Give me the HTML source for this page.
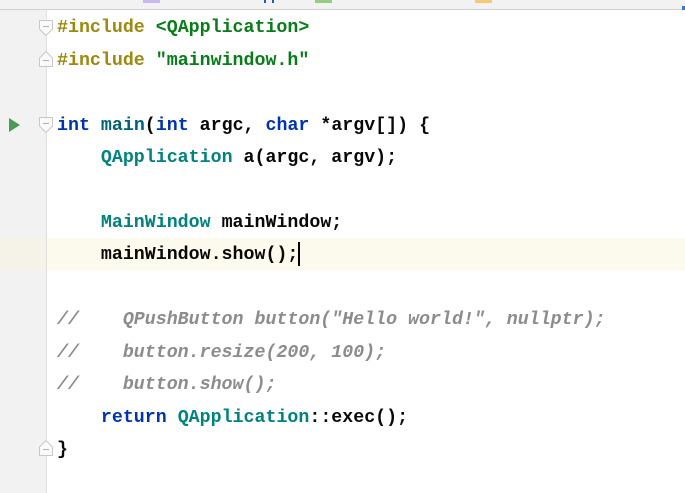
<!DOCTYPE html>
<html><head><style>
body{margin:0;width:685px;height:493px;overflow:hidden;background:#fff;position:relative;font-family:"Liberation Mono",monospace;}
#top{position:absolute;left:0;top:0;width:685px;height:9px;background:#f2f2f2;border-bottom:1px solid #d0d0d0;}
#gut{position:absolute;left:0;top:10px;width:46px;height:483px;background:#f2f2f2;border-right:1px solid #e0e0e0;}
#hl{position:absolute;left:0;top:238px;width:685px;height:32px;background:#fcfaed;}
#hlg{position:absolute;left:0;top:238px;width:46px;height:32px;background:#f5f3e8;border-right:1px solid #e0e0e0;}
.l{position:absolute;left:57px;height:32px;line-height:32px;font-size:18.3px;font-weight:bold;white-space:pre;color:#080808;}
.pp{color:#9e880d}.s{color:#067d17}.k{color:#0033b3}.t{color:#00827f}.f{color:#00627a}.c{color:#8c8c8c;font-style:italic}
.fold{position:absolute;left:38px;}
</style></head><body>
<div id="top">
<div style="position:absolute;left:143px;top:0;width:17px;height:3px;background:#c8b8f0"></div>
<div style="position:absolute;left:264px;top:0;width:2px;height:3px;background:#2060b0"></div>
<div style="position:absolute;left:272px;top:0;width:2px;height:3px;background:#2060b0"></div>
<div style="position:absolute;left:315px;top:0;width:17px;height:3px;background:#98cc80"></div>
<div style="position:absolute;left:475px;top:0;width:17px;height:3px;background:#f5c87a"></div>
<div style="position:absolute;left:682px;top:6px;width:3px;height:4px;background:#3a78d8"></div>
</div>
<div id="gut"></div>
<div id="hl"></div><div id="hlg"></div>
<svg class="fold" style="top:19px" width="16" height="18"><path d="M1.5 1.5H14.5V10L8 16.5L1.5 10Z" fill="#fafafa" stroke="#c8c8c8"/><path d="M5 7.5H11" stroke="#b0b0b0"/></svg>
<svg class="fold" style="top:50px" width="16" height="18"><path d="M1.5 16.5H14.5V8L8 1.5L1.5 8Z" fill="#fafafa" stroke="#c8c8c8"/><path d="M5 10.5H11" stroke="#b0b0b0"/></svg>
<svg class="fold" style="top:116px" width="16" height="18"><path d="M1.5 1.5H14.5V10L8 16.5L1.5 10Z" fill="#fafafa" stroke="#c8c8c8"/><path d="M5 7.5H11" stroke="#b0b0b0"/></svg>
<svg class="fold" style="top:439px" width="16" height="18"><path d="M1.5 16.5H14.5V8L8 1.5L1.5 8Z" fill="#fafafa" stroke="#c8c8c8"/><path d="M5 10.5H11" stroke="#b0b0b0"/></svg>
<svg style="position:absolute;left:9px;top:118px" width="12" height="14"><polygon points="0,0 11,7 0,14" fill="#499c54"/></svg>
<div class="l" style="top:12px"><span class="pp">#include</span> <span class="s">&lt;QApplication&gt;</span></div>
<div class="l" style="top:45px"><span class="pp">#include</span> <span class="s">"mainwindow.h"</span></div>
<div class="l" style="top:110px"><span class="k">int</span> <span class="f">main</span>(<span class="k">int</span> argc, <span class="k">char</span> *argv[]) {</div>
<div class="l" style="top:142px">    <span class="t">QApplication</span> a(argc, argv);</div>
<div class="l" style="top:207px">    <span class="t">MainWindow</span> mainWindow;</div>
<div class="l" style="top:239px">    mainWindow.show();<span style="display:inline-block;width:2px;height:24px;background:#000;vertical-align:middle"></span></div>
<div class="l c" style="top:304px">//    QPushButton button("Hello world!", nullptr);</div>
<div class="l c" style="top:337px">//    button.resize(200, 100);</div>
<div class="l c" style="top:369px">//    button.show();</div>
<div class="l" style="top:402px">    <span class="k">return</span> <span class="t">QApplication</span>::exec();</div>
<div class="l" style="top:434px">}</div>
</body></html>
